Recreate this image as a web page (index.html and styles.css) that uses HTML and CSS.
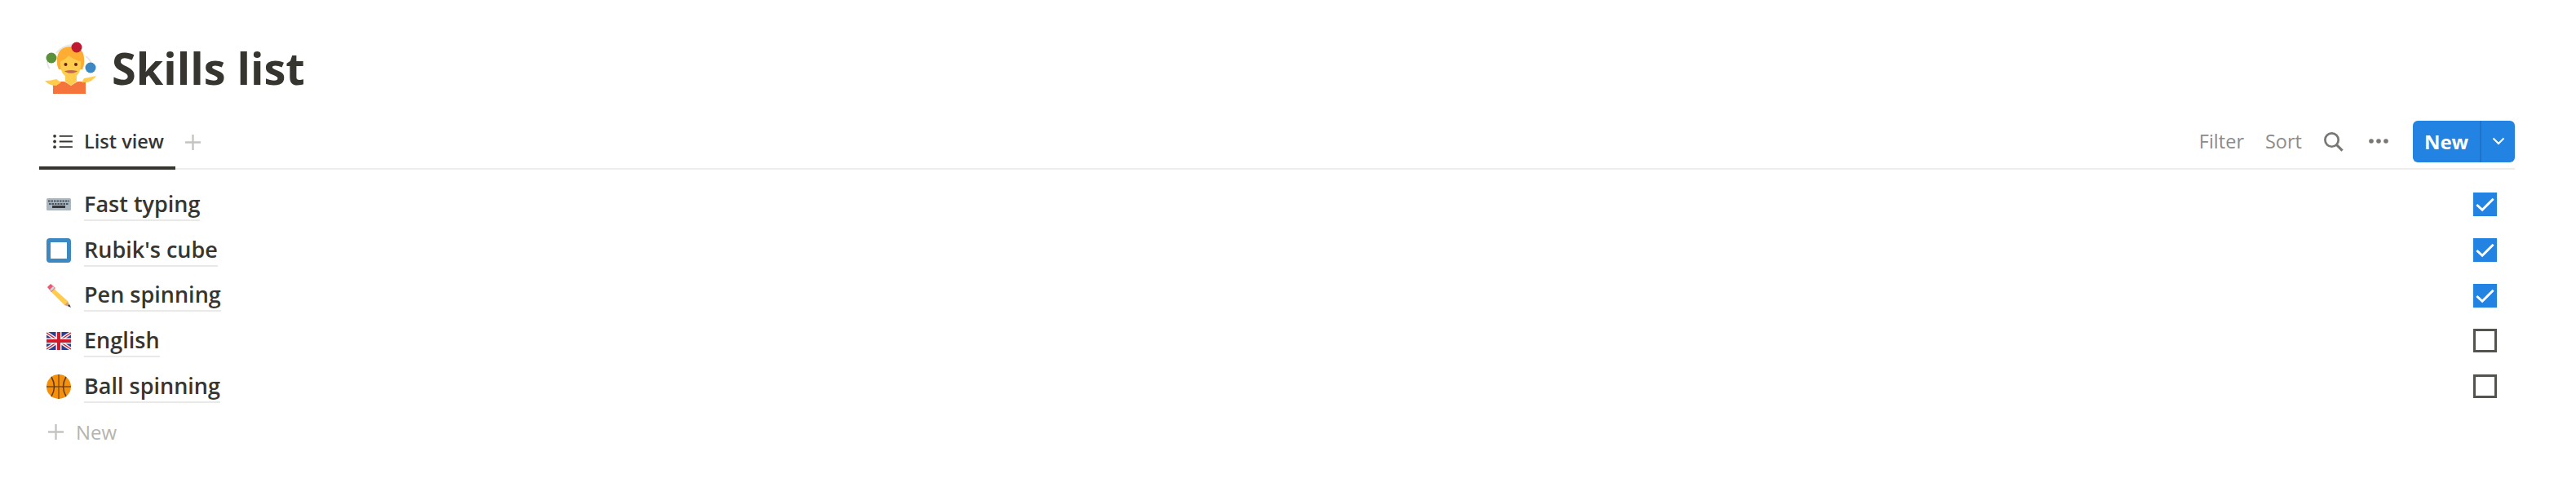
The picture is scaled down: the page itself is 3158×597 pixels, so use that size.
FILE: index.html
```html
<!DOCTYPE html>
<html>
<head>
  <title>Skills list</title>
  <link rel="stylesheet" href="styles.css">
</head>
<body>
  <div class="page">
    <div class="title-row">
      <svg class="title-icon" viewBox="0 0 64 64">
        <path d="M14 14 Q24 3 36 4" fill="none" stroke="#e6e7e8" stroke-width="2"/>
        <path d="M50 18 Q55 21 57 27" fill="none" stroke="#e6e7e8" stroke-width="2"/>
        <path d="M3 24 Q3 30 6 33" fill="none" stroke="#e6e7e8" stroke-width="2"/>
        <path d="M10 49H24L32 54L40 49H50V64H10Z" fill="#f4743b"/>
        <path d="M0 48 Q8 48 14 46 L20 50 L14 54 Q5 54 0 48Z M63 42 Q54 44 48 45 L45 50 L51 50 Q58 49 63 42Z" fill="#ffcc4d"/>
        <path d="M25 40H39V49L32 54L25 49Z" fill="#ffcc4d"/>
        <path d="M15 20 Q17 6 32 6 Q47 6 48 20 Q49 28 46 34 L17 34 Q14 28 15 20Z" fill="#ffac33"/>
        <path d="M19 24 Q26 22 29 17 Q37 23 44 24 Q45 43 32 45 Q18 43 19 24Z" fill="#ffcc4d"/>
        <circle cx="25.500" cy="28" r="2" fill="#662113"/>
        <circle cx="38" cy="28" r="2" fill="#662113"/>
        <path d="M26 36.500 Q32 39.500 38 36.500 Q32 35 26 36.500Z" fill="#c1694f" stroke="#c1694f" stroke-width="1.500"/>
        <circle cx="39" cy="7" r="6.500" fill="#be1931"/>
        <circle cx="8" cy="20" r="6.500" fill="#5c913b"/>
        <circle cx="56" cy="32" r="6.500" fill="#3b88c3"/>
      </svg>
      <h1 class="title">Skills list</h1>
    </div>

    <div class="tabs">
      <div class="tab-left">
        <div class="tab active">
          <svg class="list-icon" viewBox="0 0 26 20">
            <circle cx="2" cy="3" r="2" fill="#37352f"/>
            <circle cx="2" cy="10" r="2" fill="#37352f"/>
            <circle cx="2" cy="17" r="2" fill="#37352f"/>
            <path d="M8 3H25M8 10H25M8 17H25" stroke="#37352f" stroke-width="2"/>
          </svg>
          <span>List view</span>
        </div>
        <svg class="tab-add" viewBox="0 0 22 22">
          <path d="M11 1V21M1 11H21" stroke="#c4c4c1" stroke-width="2.500"/>
        </svg>
      </div>
      <div class="tools">
        <span class="tool-text">Filter</span>
        <span class="tool-text">Sort</span>
        <svg class="search-icon" viewBox="0 0 26 26">
          <circle cx="11" cy="11" r="8.500" fill="none" stroke="#787774" stroke-width="2.800"/>
          <path d="M17 17L24.500 24.500" stroke="#787774" stroke-width="3.200"/>
        </svg>
        <svg class="dots-icon" viewBox="0 0 24 6">
          <circle cx="3" cy="3" r="2.800" fill="#787774"/>
          <circle cx="12" cy="3" r="2.800" fill="#787774"/>
          <circle cx="21" cy="3" r="2.800" fill="#787774"/>
        </svg>
        <div class="new-btn">
          <span class="new-label">New</span>
          <span class="new-arrow">
            <svg viewBox="0 0 16 10"><path d="M1.500 1.500L8 8L14.500 1.500" fill="none" stroke="#fff" stroke-width="2"/></svg>
          </span>
        </div>
      </div>
    </div>

    <div class="list">
      <div class="row">
        <div class="row-name">
          <svg class="row-icon" viewBox="0 0 30 30">
            <rect x="0" y="7" width="30" height="15" rx="1.500" fill="#a9b7c3"/>
            <path d="M2 10.500H28M3 14H27" stroke="#4b545d" stroke-width="1.800" stroke-dasharray="2.500 1"/>
            <path d="M7 17.500H23" stroke="#31373d" stroke-width="3"/>
          </svg>
          <span class="row-text">Fast typing</span>
        </div>
        <span class="check on"><svg viewBox="0 0 30 30"><path d="M4.500 15.500L11.500 22L25.500 8" fill="none" stroke="#fff" stroke-width="3"/></svg></span>
      </div>
      <div class="row">
        <div class="row-name">
          <svg class="row-icon" viewBox="0 0 30 30">
            <rect x="2.500" y="2.500" width="25" height="25" rx="1.500" fill="#fff" stroke="#3b88c3" stroke-width="5"/>
          </svg>
          <span class="row-text">Rubik's cube</span>
        </div>
        <span class="check on"><svg viewBox="0 0 30 30"><path d="M4.500 15.500L11.500 22L25.500 8" fill="none" stroke="#fff" stroke-width="3"/></svg></span>
      </div>
      <div class="row">
        <div class="row-name">
          <svg class="row-icon" viewBox="0 0 30 30">
            <path d="M8 6L26 22L29 29L22 27L5 10Z" fill="#ffcc4d"/>
            <path d="M1 5L5 1L11 6L6 11Z" fill="#ea596e"/>
            <path d="M4 8L8 4L10 6L6 10Z" fill="#ccd6dd"/>
            <path d="M22 27L26 23L29 29Z" fill="#d99e82"/>
            <path d="M26 28L28 26L30 30Z" fill="#31373d"/>
          </svg>
          <span class="row-text">Pen spinning</span>
        </div>
        <span class="check on"><svg viewBox="0 0 30 30"><path d="M4.500 15.500L11.500 22L25.500 8" fill="none" stroke="#fff" stroke-width="3"/></svg></span>
      </div>
      <div class="row">
        <div class="row-name">
          <svg class="row-icon" viewBox="0 0 30 30">
            <rect x="0" y="4" width="30" height="22" rx="3" fill="#2a3f8f"/>
            <path d="M0 5L30 25M30 5L0 25" stroke="#eee" stroke-width="4"/>
            <path d="M0 5L30 25M30 5L0 25" stroke="#cf1b2b" stroke-width="1.200"/>
            <path d="M15 4V26M0 15H30" stroke="#eee" stroke-width="7"/>
            <path d="M15 4V26M0 15H30" stroke="#cf1b2b" stroke-width="4"/>
          </svg>
          <span class="row-text">English</span>
        </div>
        <span class="check"></span>
      </div>
      <div class="row">
        <div class="row-name">
          <svg class="row-icon" viewBox="0 0 30 30">
            <circle cx="15" cy="15" r="15" fill="#f4900c"/>
            <path d="M15 0V30M0 15H30" stroke="#7a4a10" stroke-width="1.300"/>
            <path d="M6 3Q13 15 6 27M24 3Q17 15 24 27" fill="none" stroke="#5c3a12" stroke-width="1.500"/>
          </svg>
          <span class="row-text">Ball spinning</span>
        </div>
        <span class="check"></span>
      </div>
    </div>

    <div class="add-row">
      <svg class="add-icon" viewBox="0 0 22 22">
        <path d="M11 1V21M1 11H21" stroke="#c4c4c1" stroke-width="2.500"/>
      </svg>
      <span>New</span>
    </div>
  </div>
</body>
</html>
```

FILE: styles.css
```css
body {
  margin: 0;
  font-family: 'Open Sans', 'Noto Sans', sans-serif;
  color: #37352f;
  background: #ffffff;
}

.page {
  padding: 46px 75px 0 48px;
}

/* Title */
.title-row {
  display: flex;
  align-items: center;
  height: 74px;
}

.title-icon {
  width: 64px;
  height: 64px;
  margin-left: 7px;
  margin-right: 18px;
}

.title {
  margin: 0;
  font-size: 54px;
  font-weight: 700;
  line-height: 74px;
}

/* Tab bar */
.tabs {
  display: flex;
  justify-content: space-between;
  align-items: center;
  height: 66px;
  margin-top: 22px;
  border-bottom: 2px solid #ededec;
  box-sizing: border-box;
}

.tab-left {
  display: flex;
  align-items: center;
  height: 100%;
}

.tab {
  display: flex;
  align-items: center;
  gap: 13px;
  height: 100%;
  padding: 0 14px 0 17px;
  box-sizing: border-box;
  font-size: 23.5px;
  font-weight: 600;
  margin-bottom: -2px;
}

.tab.active {
  border-bottom: 4px solid #37352f;
  height: 66px;
}

.list-icon {
  width: 25px;
  height: 19px;
}

.tab-add {
  width: 21px;
  height: 21px;
  margin-left: 11px;
}

.tools {
  display: flex;
  align-items: center;
  margin-bottom: 2px;
  font-size: 23.5px;
  color: #8d8c88;
}

.tool-text {
  margin-right: 26px;
}

.search-icon {
  width: 25px;
  height: 25px;
  margin-right: 31px;
}

.dots-icon {
  width: 24px;
  height: 6px;
  margin-right: 30px;
}

.new-btn {
  display: flex;
  width: 125px;
  height: 51px;
  background: #2383e2;
  border-radius: 6px;
  color: #ffffff;
  font-weight: 700;
  font-size: 24px;
}

.new-label {
  display: flex;
  align-items: center;
  justify-content: center;
  width: 82px;
  border-right: 2px solid #1f74c9;
}

.new-arrow {
  display: flex;
  align-items: center;
  justify-content: center;
  flex: 1;
}

.new-arrow svg {
  width: 16px;
  height: 10px;
}

/* Rows */
.list {
  padding-top: 15px;
}

.row {
  display: flex;
  justify-content: space-between;
  align-items: center;
  height: 55.7px;
}

.row-name {
  display: flex;
  align-items: center;
  padding-left: 9px;
}

.row-icon {
  width: 30px;
  height: 30px;
  margin-right: 16px;
}

.row-text {
  font-size: 27px;
  font-weight: 600;
  line-height: 38px;
  border-bottom: 2px solid #e9e9e7;
}

.check {
  display: block;
  width: 29px;
  height: 29px;
  margin-right: 22px;
  box-sizing: border-box;
  border: 3px solid #55534e;
  background: #ffffff;
}

.check.on {
  border: none;
  background: #2383e2;
}

.check svg {
  display: block;
  width: 29px;
  height: 29px;
}

.add-row {
  display: flex;
  align-items: center;
  height: 56px;
  padding-left: 10px;
  font-size: 24px;
  color: #b4b4b0;
}

.add-icon {
  width: 21px;
  height: 21px;
  margin-right: 14px;
}
```
